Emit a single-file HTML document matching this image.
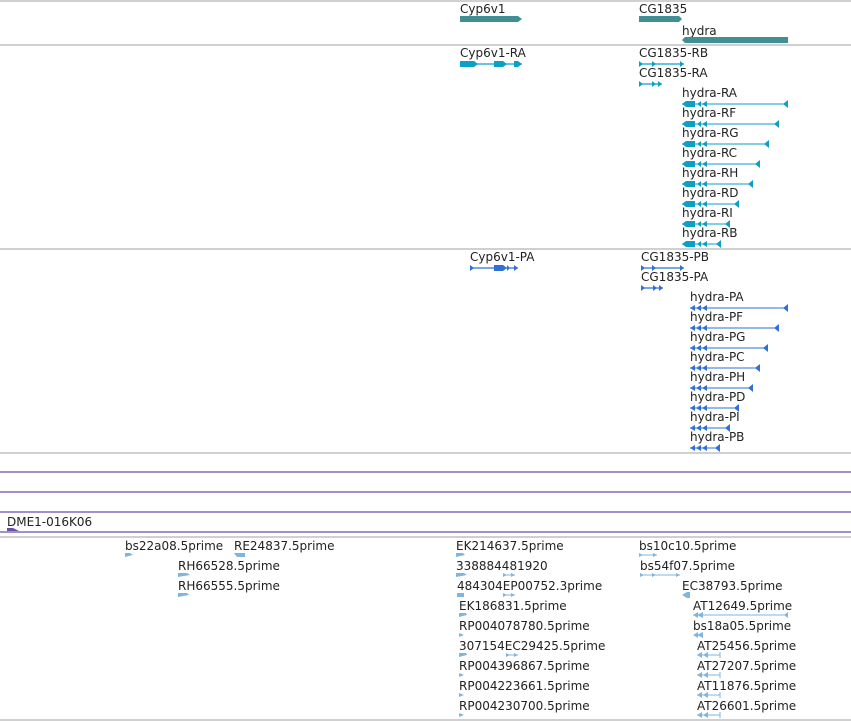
<!DOCTYPE html>
<html><head><meta charset="utf-8"><style>
html,body{margin:0;padding:0;background:#fff;}
svg{display:block}
text{font-family:"DejaVu Sans","Liberation Sans",sans-serif;font-size:12px;fill:#222}
</style></head><body>
<svg width="851" height="721" viewBox="0 0 851 721" xmlns="http://www.w3.org/2000/svg">
<g stroke="#c0c0c0" stroke-width="1.5">
<line x1="0" y1="1" x2="851" y2="1"/><line x1="0" y1="45" x2="851" y2="45"/>
<line x1="0" y1="249" x2="851" y2="249"/><line x1="0" y1="453" x2="851" y2="453"/>
<line x1="0" y1="537" x2="851" y2="537"/><line x1="0" y1="720" x2="851" y2="720"/>
</g>
<g stroke="#6a4fa8" stroke-width="1.3">
<line x1="0" y1="472" x2="851" y2="472"/><line x1="0" y1="492" x2="851" y2="492"/>
<line x1="0" y1="512" x2="851" y2="512"/><line x1="0" y1="532" x2="851" y2="532"/>
</g>
<!-- panel 1 -->
<text x="460" y="13">Cyp6v1</text>
<polygon points="460,16 518,16 522,19 518,22 460,22" fill="#3f8f94"/>
<text x="639" y="13">CG1835</text>
<polygon points="639,16 679,16 682,19 679,22 639,22" fill="#3f8f94"/>
<text x="682" y="35">hydra</text>
<polygon points="685,37 788,37 788,43 685,43 682,40" fill="#3f8f94"/>
<!-- panel 2 -->
<g fill="#0e9fc6" stroke="#0e9fc6">
<text x="460" y="57" stroke="none">Cyp6v1-RA</text>
<line x1="460" y1="64" x2="522" y2="64" stroke-width="1.2"/>
<polygon points="460,61 474,61 478,64 474,67 460,67" stroke="none"/>
<polygon points="494,61 503,61 507,64 503,67 494,67" stroke="none"/>
<polygon points="514,61 518,61 522,64 518,67 514,67" stroke="none"/>
<text x="639" y="57" stroke="none">CG1835-RB</text>
<line x1="639" y1="64" x2="684" y2="64" stroke-width="1.2"/>
<polygon points="639,61 643,64 639,67" stroke="none"/><polygon points="652,61 656,64 652,67" stroke="none"/><polygon points="680,61 684,64 680,67" stroke="none"/>
<text x="639" y="77" stroke="none">CG1835-RA</text>
<line x1="639" y1="84" x2="662" y2="84" stroke-width="1.2"/>
<polygon points="639,81 643,84 639,87" stroke="none"/><polygon points="652,81 656,84 652,87" stroke="none"/><polygon points="658,81 662,84 658,87" stroke="none"/>
</g>
<g fill="#0e9fc6" stroke="#0e9fc6" id="h">
<text x="682" y="97" stroke="none">hydra-RA</text>
<text x="682" y="117" stroke="none">hydra-RF</text>
<text x="682" y="137" stroke="none">hydra-RG</text>
<text x="682" y="157" stroke="none">hydra-RC</text>
<text x="682" y="177" stroke="none">hydra-RH</text>
<text x="682" y="197" stroke="none">hydra-RD</text>
<text x="682" y="217" stroke="none">hydra-RI</text>
<text x="682" y="237" stroke="none">hydra-RB</text>
<line x1="682" y1="104" x2="788" y2="104"/><line x1="682" y1="124" x2="779" y2="124"/>
<line x1="682" y1="144" x2="769" y2="144"/><line x1="682" y1="164" x2="760" y2="164"/>
<line x1="682" y1="184" x2="753" y2="184"/><line x1="682" y1="204" x2="739" y2="204"/>
<line x1="682" y1="224" x2="730" y2="224"/><line x1="682" y1="244" x2="721" y2="244"/>
<g stroke="none">
<polygon points="788,100 788,108 783,104"/><polygon points="779,120 779,128 774,124"/>
<polygon points="769,140 769,148 764,144"/><polygon points="760,160 760,168 755,164"/>
<polygon points="753,180 753,188 748,184"/><polygon points="739,200 739,208 734,204"/>
<polygon points="730,220 730,228 725,224"/><polygon points="721,240 721,248 716,244"/>
</g>
</g>
<g fill="#0e9fc6">
<polygon points="682,104 686,101 695,101 695,107 686,107"/><polygon points="697,104 701,101 701,107"/><polygon points="702,104 707,101 707,107"/>
<polygon points="682,124 686,121 695,121 695,127 686,127"/><polygon points="697,124 701,121 701,127"/><polygon points="702,124 707,121 707,127"/>
<polygon points="682,144 686,141 695,141 695,147 686,147"/><polygon points="697,144 701,141 701,147"/><polygon points="702,144 707,141 707,147"/>
<polygon points="682,164 686,161 695,161 695,167 686,167"/><polygon points="697,164 701,161 701,167"/><polygon points="702,164 707,161 707,167"/>
<polygon points="682,184 686,181 695,181 695,187 686,187"/><polygon points="697,184 701,181 701,187"/><polygon points="702,184 707,181 707,187"/>
<polygon points="682,204 686,201 695,201 695,207 686,207"/><polygon points="697,204 701,201 701,207"/><polygon points="702,204 707,201 707,207"/>
<polygon points="682,224 686,221 695,221 695,227 686,227"/><polygon points="697,224 701,221 701,227"/><polygon points="702,224 707,221 707,227"/>
<polygon points="682,244 686,241 695,241 695,247 686,247"/><polygon points="697,244 701,241 701,247"/><polygon points="702,244 707,241 707,247"/>
</g>
<!-- panel 3 -->
<g fill="#2f6fd6" stroke="#2f6fd6">
<text x="470" y="261" stroke="none">Cyp6v1-PA</text>
<line x1="470" y1="268" x2="518" y2="268" stroke-width="1.2"/>
<polygon points="470,265 474,268 470,271" stroke="none"/><polygon points="494,265 503,265 507,268 503,271 494,271" stroke="none"/><polygon points="507,265 510,268 507,271" stroke="none"/><polygon points="514,265 518,268 514,271" stroke="none"/>
<text x="641" y="261" stroke="none">CG1835-PB</text>
<line x1="641" y1="268" x2="684" y2="268" stroke-width="1.2"/>
<polygon points="641,265 645,268 641,271" stroke="none"/><polygon points="652,265 656,268 652,271" stroke="none"/><polygon points="680,265 684,268 680,271" stroke="none"/>
<text x="641" y="281" stroke="none">CG1835-PA</text>
<line x1="641" y1="288" x2="663" y2="288" stroke-width="1.2"/>
<polygon points="641,285 645,288 641,291" stroke="none"/><polygon points="653,285 657,288 653,291" stroke="none"/><polygon points="659,285 663,288 659,291" stroke="none"/>
<text x="690" y="301" stroke="none">hydra-PA</text>
<text x="690" y="321" stroke="none">hydra-PF</text>
<text x="690" y="341" stroke="none">hydra-PG</text>
<text x="690" y="361" stroke="none">hydra-PC</text>
<text x="690" y="381" stroke="none">hydra-PH</text>
<text x="690" y="401" stroke="none">hydra-PD</text>
<text x="690" y="421" stroke="none">hydra-PI</text>
<text x="690" y="441" stroke="none">hydra-PB</text>
<line x1="690" y1="308" x2="788" y2="308"/><line x1="690" y1="328" x2="779" y2="328"/>
<line x1="690" y1="348" x2="768" y2="348"/><line x1="690" y1="368" x2="760" y2="368"/>
<line x1="690" y1="388" x2="753" y2="388"/><line x1="690" y1="408" x2="739" y2="408"/>
<line x1="690" y1="428" x2="730" y2="428"/><line x1="690" y1="448" x2="720" y2="448"/>
<g stroke="none">
<polygon points="788,304 788,312 783,308"/><polygon points="779,324 779,332 774,328"/>
<polygon points="768,344 768,352 763,348"/><polygon points="760,364 760,372 755,368"/>
<polygon points="753,384 753,392 748,388"/><polygon points="739,404 739,412 734,408"/>
<polygon points="730,424 730,432 725,428"/><polygon points="720,444 720,452 715,448"/>
<polygon points="690,308 695,305 695,311"/><polygon points="696,308 701,305 701,311"/><polygon points="702,308 707,305 707,311"/>
<polygon points="690,328 695,325 695,331"/><polygon points="696,328 701,325 701,331"/><polygon points="702,328 707,325 707,331"/>
<polygon points="690,348 695,345 695,351"/><polygon points="696,348 701,345 701,351"/><polygon points="702,348 707,345 707,351"/>
<polygon points="690,368 695,365 695,371"/><polygon points="696,368 701,365 701,371"/><polygon points="702,368 707,365 707,371"/>
<polygon points="690,388 695,385 695,391"/><polygon points="696,388 701,385 701,391"/><polygon points="702,388 707,385 707,391"/>
<polygon points="690,408 695,405 695,411"/><polygon points="696,408 701,405 701,411"/><polygon points="702,408 707,405 707,411"/>
<polygon points="690,428 695,425 695,431"/><polygon points="696,428 701,425 701,431"/><polygon points="702,428 707,425 707,431"/>
<polygon points="690,448 695,445 695,451"/><polygon points="696,448 701,445 701,451"/><polygon points="702,448 707,445 707,451"/>
</g>
</g>
<!-- clone -->
<text x="7" y="526">DME1-016K06</text>
<polygon points="7,528 13,528 19,531 7,531" fill="#6a4fa8"/>
<!-- ESTs -->
<g fill="#7fb6df" stroke="#7fb6df">
<g stroke="none" fill="#222">
<text x="125" y="550">bs22a08.5prime</text><text x="234" y="550">RE24837.5prime</text>
<text x="178" y="570">RH66528.5prime</text><text x="178" y="590">RH66555.5prime</text>
<text x="456" y="550">EK214637.5prime</text><text x="456" y="570">338884481920</text>
<text x="457" y="590">484304EP00752.3prime</text><text x="459" y="610">EK186831.5prime</text>
<text x="459" y="630">RP004078780.5prime</text><text x="459" y="650">307154EC29425.5prime</text>
<text x="459" y="670">RP004396867.5prime</text><text x="459" y="690">RP004223661.5prime</text>
<text x="459" y="710">RP004230700.5prime</text>
<text x="639" y="550">bs10c10.5prime</text><text x="640" y="570">bs54f07.5prime</text>
<text x="682" y="590">EC38793.5prime</text><text x="693" y="610">AT12649.5prime</text>
<text x="693" y="630">bs18a05.5prime</text><text x="697" y="650">AT25456.5prime</text>
<text x="697" y="670">AT27207.5prime</text><text x="697" y="690">AT11876.5prime</text>
<text x="697" y="710">AT26601.5prime</text>
</g>
<g stroke="none">
<polygon points="125,553 130,553 133,555 125,557"/>
<polygon points="234,553 245,553 245,557 237,557"/>
<polygon points="178,573 187,573 190,575 178,577"/>
<polygon points="178,593 187,593 189,595 178,597"/>
<polygon points="456,553 463,553 465,555 456,557"/>
<polygon points="456,573 464,573 467,575 456,577"/>
<polygon points="457,593 464,593 464,597 457,597"/>
<polygon points="459,613 466,613 467,615 459,617"/>
<polygon points="459,633 464,635 459,637"/>
<polygon points="459,653 466,653 467,655 459,657"/>
<polygon points="459,673 464,675 459,677"/>
<polygon points="459,693 464,695 459,697"/>
<polygon points="459,713 464,715 459,717"/>
<polygon points="682,595 687,592 690,592 690,598 687,598"/>
<polygon points="693,615 698,612 698,618"/><polygon points="697,615 703,612 703,618"/><polygon points="788,612 788,618 784,615"/>
<polygon points="693,635 698,632 698,638"/><polygon points="697,635 703,632 703,638"/>
<polygon points="697,655 702,652 702,658"/><polygon points="703,655 708,652 708,658"/>
<polygon points="697,675 702,672 702,678"/><polygon points="703,675 708,672 708,678"/>
<polygon points="697,695 702,692 702,698"/><polygon points="703,695 708,692 708,698"/>
<polygon points="697,715 702,712 702,718"/><polygon points="703,715 708,712 708,718"/>
<polygon points="503,573 507,575 503,577"/><polygon points="511,573 515,575 511,577"/>
<polygon points="503,593 507,595 503,597"/><polygon points="511,593 515,595 511,597"/>
<polygon points="506,653 510,655 506,657"/><polygon points="514,653 518,655 514,657"/>
<polygon points="639,553 643,555 639,557"/><polygon points="653,553 657,555 653,557"/>
<polygon points="640,573 644,575 640,577"/><polygon points="652,573 656,575 652,577"/><polygon points="676,573 680,575 676,577"/>
</g>
<line x1="503" y1="575" x2="515" y2="575"/><line x1="503" y1="595" x2="515" y2="595"/>
<line x1="506" y1="655" x2="518" y2="655"/>
<line x1="639" y1="555" x2="657" y2="555"/><line x1="640" y1="575" x2="680" y2="575"/>
<line x1="693" y1="615" x2="788" y2="615"/>
<line x1="697" y1="655" x2="720" y2="655"/><line x1="697" y1="675" x2="720" y2="675"/>
<line x1="697" y1="695" x2="720" y2="695"/><line x1="697" y1="715" x2="720" y2="715"/>
<line x1="720" y1="652" x2="720" y2="658"/><line x1="720" y1="672" x2="720" y2="678"/>
<line x1="720" y1="692" x2="720" y2="698"/><line x1="720" y1="712" x2="720" y2="718"/>
</g>
</svg>
</body></html>
